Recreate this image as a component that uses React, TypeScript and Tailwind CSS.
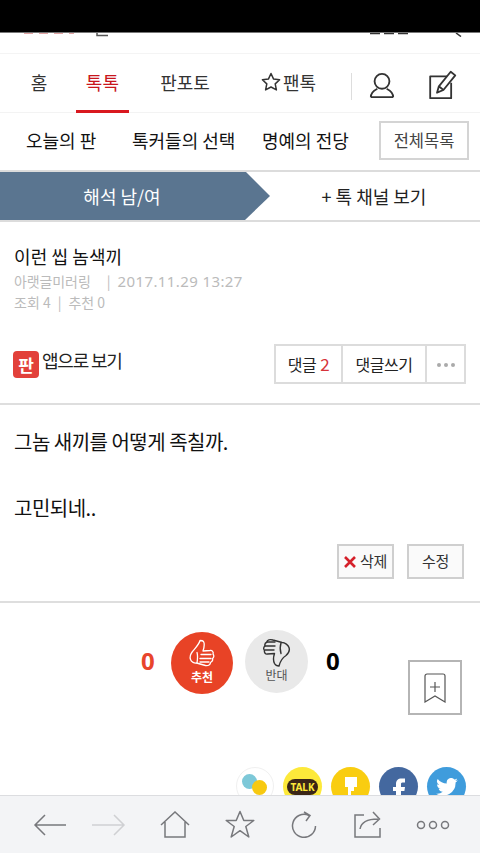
const FONT = "font-['Noto_Sans_CJK_KR','Noto_Sans',sans-serif]";

function Nav() {
  return (
    <div className="flex h-[59px] items-stretch border-b border-[#f3f3f3] text-[18px] text-[#333]">
      <div className="flex w-[78px] items-center justify-center pb-[2px]">홈</div>
      <div className="-ml-[2px] flex w-[53px] items-center justify-center border-b-[3px] border-[#d9181f] -mb-px text-[#c8161d] tracking-[0.3px]">톡톡</div>
      <div className="ml-[31px] flex w-[50px] items-center justify-center pb-[2px] whitespace-nowrap">판포토</div>
      <div className="ml-[51px] flex items-center gap-[2px] pb-[2px]">
        <svg width="20" height="20" viewBox="0 0 20 20" fill="none" stroke="#333" strokeWidth="1.500" strokeLinejoin="round">
          <path d="M10 1.500l2.600 5.600 6 .7-4.400 4.100 1.200 6L10 15l-5.400 2.900 1.200-6L1.400 7.800l6-.7z" />
        </svg>
        <span className="tracking-[0px]">팬톡</span>
      </div>
      <div className="ml-[35px] mt-[19px] h-[27px] w-px bg-[#ddd]" />
      <svg className="ml-[17px] mt-[19px]" width="26" height="26" viewBox="0 0 28 28" fill="none" stroke="#333" strokeWidth="2">
        <ellipse cx="14" cy="9" rx="8" ry="8" />
        <path d="M2 26c0-6 5-8 7-9M26 26c0-6-5-8-7-9M2 26h24" />
      </svg>
      <svg className="ml-[32px] mt-[15px]" width="31" height="31" viewBox="0 0 32 34" fill="none" stroke="#333" strokeWidth="2">
        <path d="M21 8H2.500v24h23V15" strokeLinejoin="round" />
        <path d="M10 26l2-7L25 3l5 4-13 16z M12 19l5 4" strokeLinejoin="round" />
      </svg>
    </div>
  );
}

function SubNav() {
  return (
    <div className="flex h-[57px] items-center pb-[2px] text-[18px] text-[#111] whitespace-nowrap">
      <span className="ml-[26px] w-[106px]">오늘의 판</span>
      <span className="w-[130px]">톡커들의 선택</span>
      <span className="w-[117px]">명예의 전당</span>
      <span className="flex h-[39px] w-[90px] items-center justify-center border-2 border-[#d4d4d4] text-[16.500px] text-[#444]">전체목록</span>
    </div>
  );
}

function Tabs() {
  return (
    <div className="flex h-[52px] items-stretch border-y-2 border-[#dcdcdc] text-[18px] whitespace-nowrap">
      <div className="flex w-[270px] items-center justify-center pr-[26px] text-white bg-[#5a7590] [clip-path:polygon(0_0,246px_0,270px_50%,245px_100%,0_100%)]">
        해석 남/여
      </div>
      <div className="flex flex-1 items-center justify-center pr-[2px] text-[#222]">+ 톡 채널 보기</div>
    </div>
  );
}

function ArticleHead() {
  return (
    <div className="px-[14px] pt-[21px]">
      <div className="text-[18px] leading-[27px] tracking-[0.1px] text-[#111]">이런 씹 놈색끼</div>
      <div className="flex items-center text-[#bbb] leading-[22px] whitespace-nowrap">
        <span className="text-[14px] tracking-[-0.100px]">아랫글미러링</span>
        <span className="ml-[16px] text-[14px]">|</span>
        <span className="ml-[7px] text-[15px] font-['Noto_Sans',sans-serif] tracking-[0.400px]">2017.11.29 13:27</span>
      </div>
      <div className="flex items-center text-[14px] leading-[20px] text-[#bbb]">
        조회 4<span className="mx-[7px]">|</span>추천 0
      </div>
    </div>
  );
}

function AppRow() {
  return (
    <div className="flex h-[61px] items-start pl-[13px] pr-[14px] mt-[32px] border-b-2 border-[#dedede]">
      <div className="mt-[7px] flex h-[27px] w-[26px] items-center justify-center rounded-[4px] bg-[#e2403a]">
        <span className="text-[17px] font-bold leading-none text-white">판</span>
      </div>
      <span className="ml-[3px] mt-[3px] text-[18px] tracking-[-1.200px] text-[#222] whitespace-nowrap">앱으로 보기</span>
      <div className="ml-auto flex h-[40px] border-2 border-[#dcdcdc] text-[16px] tracking-[-0.500px] text-[#222] whitespace-nowrap">
        <span className="flex w-[67px] items-center justify-center gap-[4px] border-r-2 border-[#dcdcdc]">
          댓글 <span className="text-[#d6333a] text-[17px]">2</span>
        </span>
        <span className="flex w-[84px] items-center justify-center border-r-2 border-[#dcdcdc]">댓글쓰기</span>
        <span className="flex w-[37px] items-center justify-center gap-[3px] pt-[2px]">
          <i className="h-[4px] w-[4px] rounded-full bg-[#aaa]" />
          <i className="h-[4px] w-[4px] rounded-full bg-[#aaa]" />
          <i className="h-[4px] w-[4px] rounded-full bg-[#aaa]" />
        </span>
      </div>
    </div>
  );
}

function Body() {
  return (
    <div className="border-b-2 border-[#dedede] px-[14px] pt-[20px] pb-[22px]">
      <p className="text-[20px] leading-[33px] tracking-[-0.500px] text-[#111]">그놈 새끼를 어떻게 족칠까.</p>
      <p className="mt-[33px] text-[20px] leading-[33px] tracking-[-0.500px] text-[#111]">고민되네..</p>
      <div className="mt-[20px] flex justify-end gap-[13px] pr-[2px] text-[15px] tracking-[-0.400px] text-[#333]">
        <span className="flex h-[35px] w-[57px] items-center justify-center gap-[4px] border-2 border-[#cfcfcf] bg-[#fafafa]">
          <svg width="12" height="12" viewBox="0 0 12 12" stroke="#d5202a" strokeWidth="2.600"><path d="M1 1l10 10M11 1L1 11" /></svg>
          삭제
        </span>
        <span className="flex h-[35px] w-[57px] items-center justify-center border-2 border-[#cfcfcf] bg-[#fafafa]">수정</span>
      </div>
    </div>
  );
}

function Votes() {
  return (
    <div className="relative h-[164px]">
      <div className="flex items-start pl-[141px] pt-[26px] font-['Noto_Sans',sans-serif] font-bold">
        <span className="mt-[16px] w-[30px] text-[24px] leading-[32px] text-[#e8452c]">0</span>
        <div className="mt-[3px] flex h-[62px] w-[62px] flex-col items-center rounded-full bg-[#e84326] pt-[6px]">
          <svg width="28" height="31" viewBox="0 0 28 30" fill="none" stroke="#fff" strokeWidth="1.300" strokeLinejoin="round" strokeLinecap="round">
            <path d="M12 2c-1 4-5 8-7.500 11-2 2.500-3 5-2 8 .8 2.500 4 4 6 3.500l9 2.500c3 .5 5-1 5-3 2-1 2.500-2.500 2-4 1.500-1 1.800-3 .5-4.500 1-2-1-4-3-3.500l-7 .5c1-3 2-7 .5-9.500-.8-1-2.500-1-3.500-1z" />
            <path d="M13 16h10M12 20h11M12 23.500h9M9 14c1 3 .5 7 0 10.500" />
          </svg>
          <span className="mt-[1px] text-[12px] leading-[14px] text-white font-['Noto_Sans_CJK_KR',sans-serif]">추천</span>
        </div>
        <div className="ml-[12px] mt-[1px] flex h-[63px] w-[63px] flex-col items-center rounded-full bg-[#e9e9e9] pt-[7px]">
          <svg width="28" height="31" viewBox="0 0 28 31" fill="none" stroke="#333" strokeWidth="1.400" strokeLinejoin="round" strokeLinecap="round">
            <path d="M16 29c1-4 3-8 7-10.500 3-2.500 4-5 3-8-.8-2.500-4-5-7-5L10 3C7 2 4 3 4 5 2 6 1.500 7.500 2 9 .5 10 .2 12 1.500 13.500c-.5 2 1 4 3 3.500l7-.5c-1 3-1.500 7 0 10 .8 1.500 3 2.500 4.500 2.500z" />
            <path d="M4 5h8M2 9h10M2 13h9M18 6c-1 3-1 7 0 10.500" />
          </svg>
          <span className="text-[12px] leading-[14px] font-normal text-[#555] font-['Noto_Sans_CJK_KR',sans-serif]">반대</span>
        </div>
        <span className="ml-[18px] mt-[16px] text-[24px] leading-[32px] text-black">0</span>
      </div>
      <div className="absolute left-[408px] top-[57px] flex h-[55px] w-[54px] items-center justify-center border-2 border-[#b5b5b5] bg-white">
        <svg width="22" height="30" viewBox="0 0 22 30" fill="none" stroke="#555" strokeWidth="1.200">
          <path d="M1 29V3a2 2 0 0 1 2-2h16a2 2 0 0 1 2 2v26l-10-6z" />
          <path d="M11 9v10M6 14h10" />
        </svg>
      </div>
    </div>
  );
}

function Share() {
  return (
    <div className="flex gap-[9px] pl-[236px] text-white">
      <div className="relative h-[38px] w-[38px] shrink-0 rounded-full border border-[#f0f0f0] bg-white">
        <i className="absolute left-[5px] top-[6px] h-[15px] w-[15px] rounded-full bg-[#7dc8d8]" />
        <i className="absolute left-[15px] top-[12px] h-[15px] w-[15px] rounded-full bg-[#f7c911]" />
      </div>
      <div className="flex h-[39px] w-[39px] shrink-0 items-center justify-center rounded-full bg-[#fde93a]">
        <span className="rounded-full bg-[#3a2516] px-[3px] py-[2px] text-[10px] font-bold leading-[12px] font-['Noto_Sans',sans-serif] text-[#fde93a]">TALK</span>
      </div>
      <div className="flex h-[39px] w-[39px] shrink-0 justify-center rounded-full bg-[#f9cd10] pt-[10px]">
        <svg width="14" height="24" viewBox="0 0 14 24" fill="#fff"><path d="M1 0h12v10h-3v4H7v8H4V10H1z" /></svg>
      </div>
      <div className="flex h-[39px] w-[39px] shrink-0 justify-center rounded-full bg-[#44689f] pt-[11px]">
        <svg width="14" height="26" viewBox="0 0 14 26" fill="#fff"><path d="M4 26V13H1V9h3V6c0-3.500 2-5.500 5.500-5.500H13v4h-2.500C9.200 4.500 9 5.200 9 6.500V9h4l-.6 4H9v13z" /></svg>
      </div>
      <div className="flex h-[39px] w-[39px] shrink-0 justify-center rounded-full bg-[#3f9cdc] pt-[11px]">
        <svg width="22" height="18" viewBox="0 0 24 20" fill="#fff"><path d="M24 2.400a10 10 0 0 1-2.800.8A5 5 0 0 0 23.300.5a10 10 0 0 1-3.100 1.200 4.900 4.900 0 0 0-8.400 4.500A14 14 0 0 1 1.700 1a4.900 4.900 0 0 0 1.500 6.600 5 5 0 0 1-2.200-.6 4.900 4.900 0 0 0 3.900 4.900 5 5 0 0 1-2.200.1 4.900 4.900 0 0 0 4.600 3.400A10 10 0 0 1 0 17.400 14 14 0 0 0 21.500 5c1-.7 1.900-1.600 2.500-2.600z" /></svg>
      </div>
    </div>
  );
}

function BottomBar() {
  const c = "#77787c";
  return (
    <div className="flex h-[58px] shrink-0 items-center border-t border-[#dcdde0] bg-[#f3f4f6] pl-[33px]">
      <svg width="34" height="22" viewBox="0 0 34 22" fill="none" stroke={c} strokeWidth="1.500"><path d="M33 11H2M12 1L2 11l10 10" /></svg>
      <svg className="ml-[25px]" width="34" height="22" viewBox="0 0 34 22" fill="none" stroke="#cfd0d3" strokeWidth="1.500"><path d="M0 11h32M22 1l10 10-10 10" /></svg>
      <svg className="ml-[34px]" width="30" height="28" viewBox="0 0 30 28" fill="none" stroke={c} strokeWidth="1.500"><path d="M1 14L15 1l14 13M5 11v15h20V11" /></svg>
      <svg className="ml-[35px]" width="30" height="29" viewBox="0 0 30 29" fill="none" stroke={c} strokeWidth="1.500" strokeLinejoin="round"><path d="M15 1.500l3.800 9h10l-8 6 3 10.500-8.800-6.300L6.200 27l3-10.500-8-6h10z" /></svg>
      <svg className="ml-[36px]" width="26" height="27" viewBox="0 0 26 27" fill="none" stroke={c} strokeWidth="1.500"><path d="M18 4.500A11.500 11.500 0 1 0 24.500 15M13 1l6 3.500-4 5.500" /></svg>
      <svg className="ml-[37px]" width="27" height="27" viewBox="0 0 27 27" fill="none" stroke={c} strokeWidth="1.500"><path d="M10 4H1v22h25v-9M6 18c1-6 6-10 18-10M19 1l6.500 7L19 14" /></svg>
      <svg className="ml-[35px]" width="34" height="10" viewBox="0 0 34 10" fill="none" stroke={c} strokeWidth="1.500"><circle cx="5" cy="5" r="3.500" /><circle cx="17" cy="5" r="3.500" /><circle cx="29" cy="5" r="3.500" /></svg>
    </div>
  );
}

export default function App() {
  return (
    <div className={`flex h-[853px] w-[480px] flex-col overflow-hidden bg-white ${FONT}`}>
      <div className="h-[33px] shrink-0 border-b border-[#777] bg-black" />
      <div className="min-h-0 flex-1 overflow-hidden">
        <div className="h-[21px] border-b border-[#f4f4f4]">
          <svg width="480" height="4" viewBox="0 0 480 4" className="block">
            <path d="M24 0h50" stroke="#e3a5a5" strokeWidth="2" strokeDasharray="9 6" />
            <path d="M97 0v2.500h11" fill="none" stroke="#555" strokeWidth="1.500" />
            <path d="M370 0h40" stroke="#333" strokeWidth="2.500" strokeDasharray="10 4" />
            <path d="M456 0l5 3.500" stroke="#333" strokeWidth="1.500" />
          </svg>
        </div>
        <Nav />
        <SubNav />
        <Tabs />
        <ArticleHead />
        <AppRow />
        <Body />
        <Votes />
        <Share />
      </div>
      <BottomBar />
    </div>
  );
}
